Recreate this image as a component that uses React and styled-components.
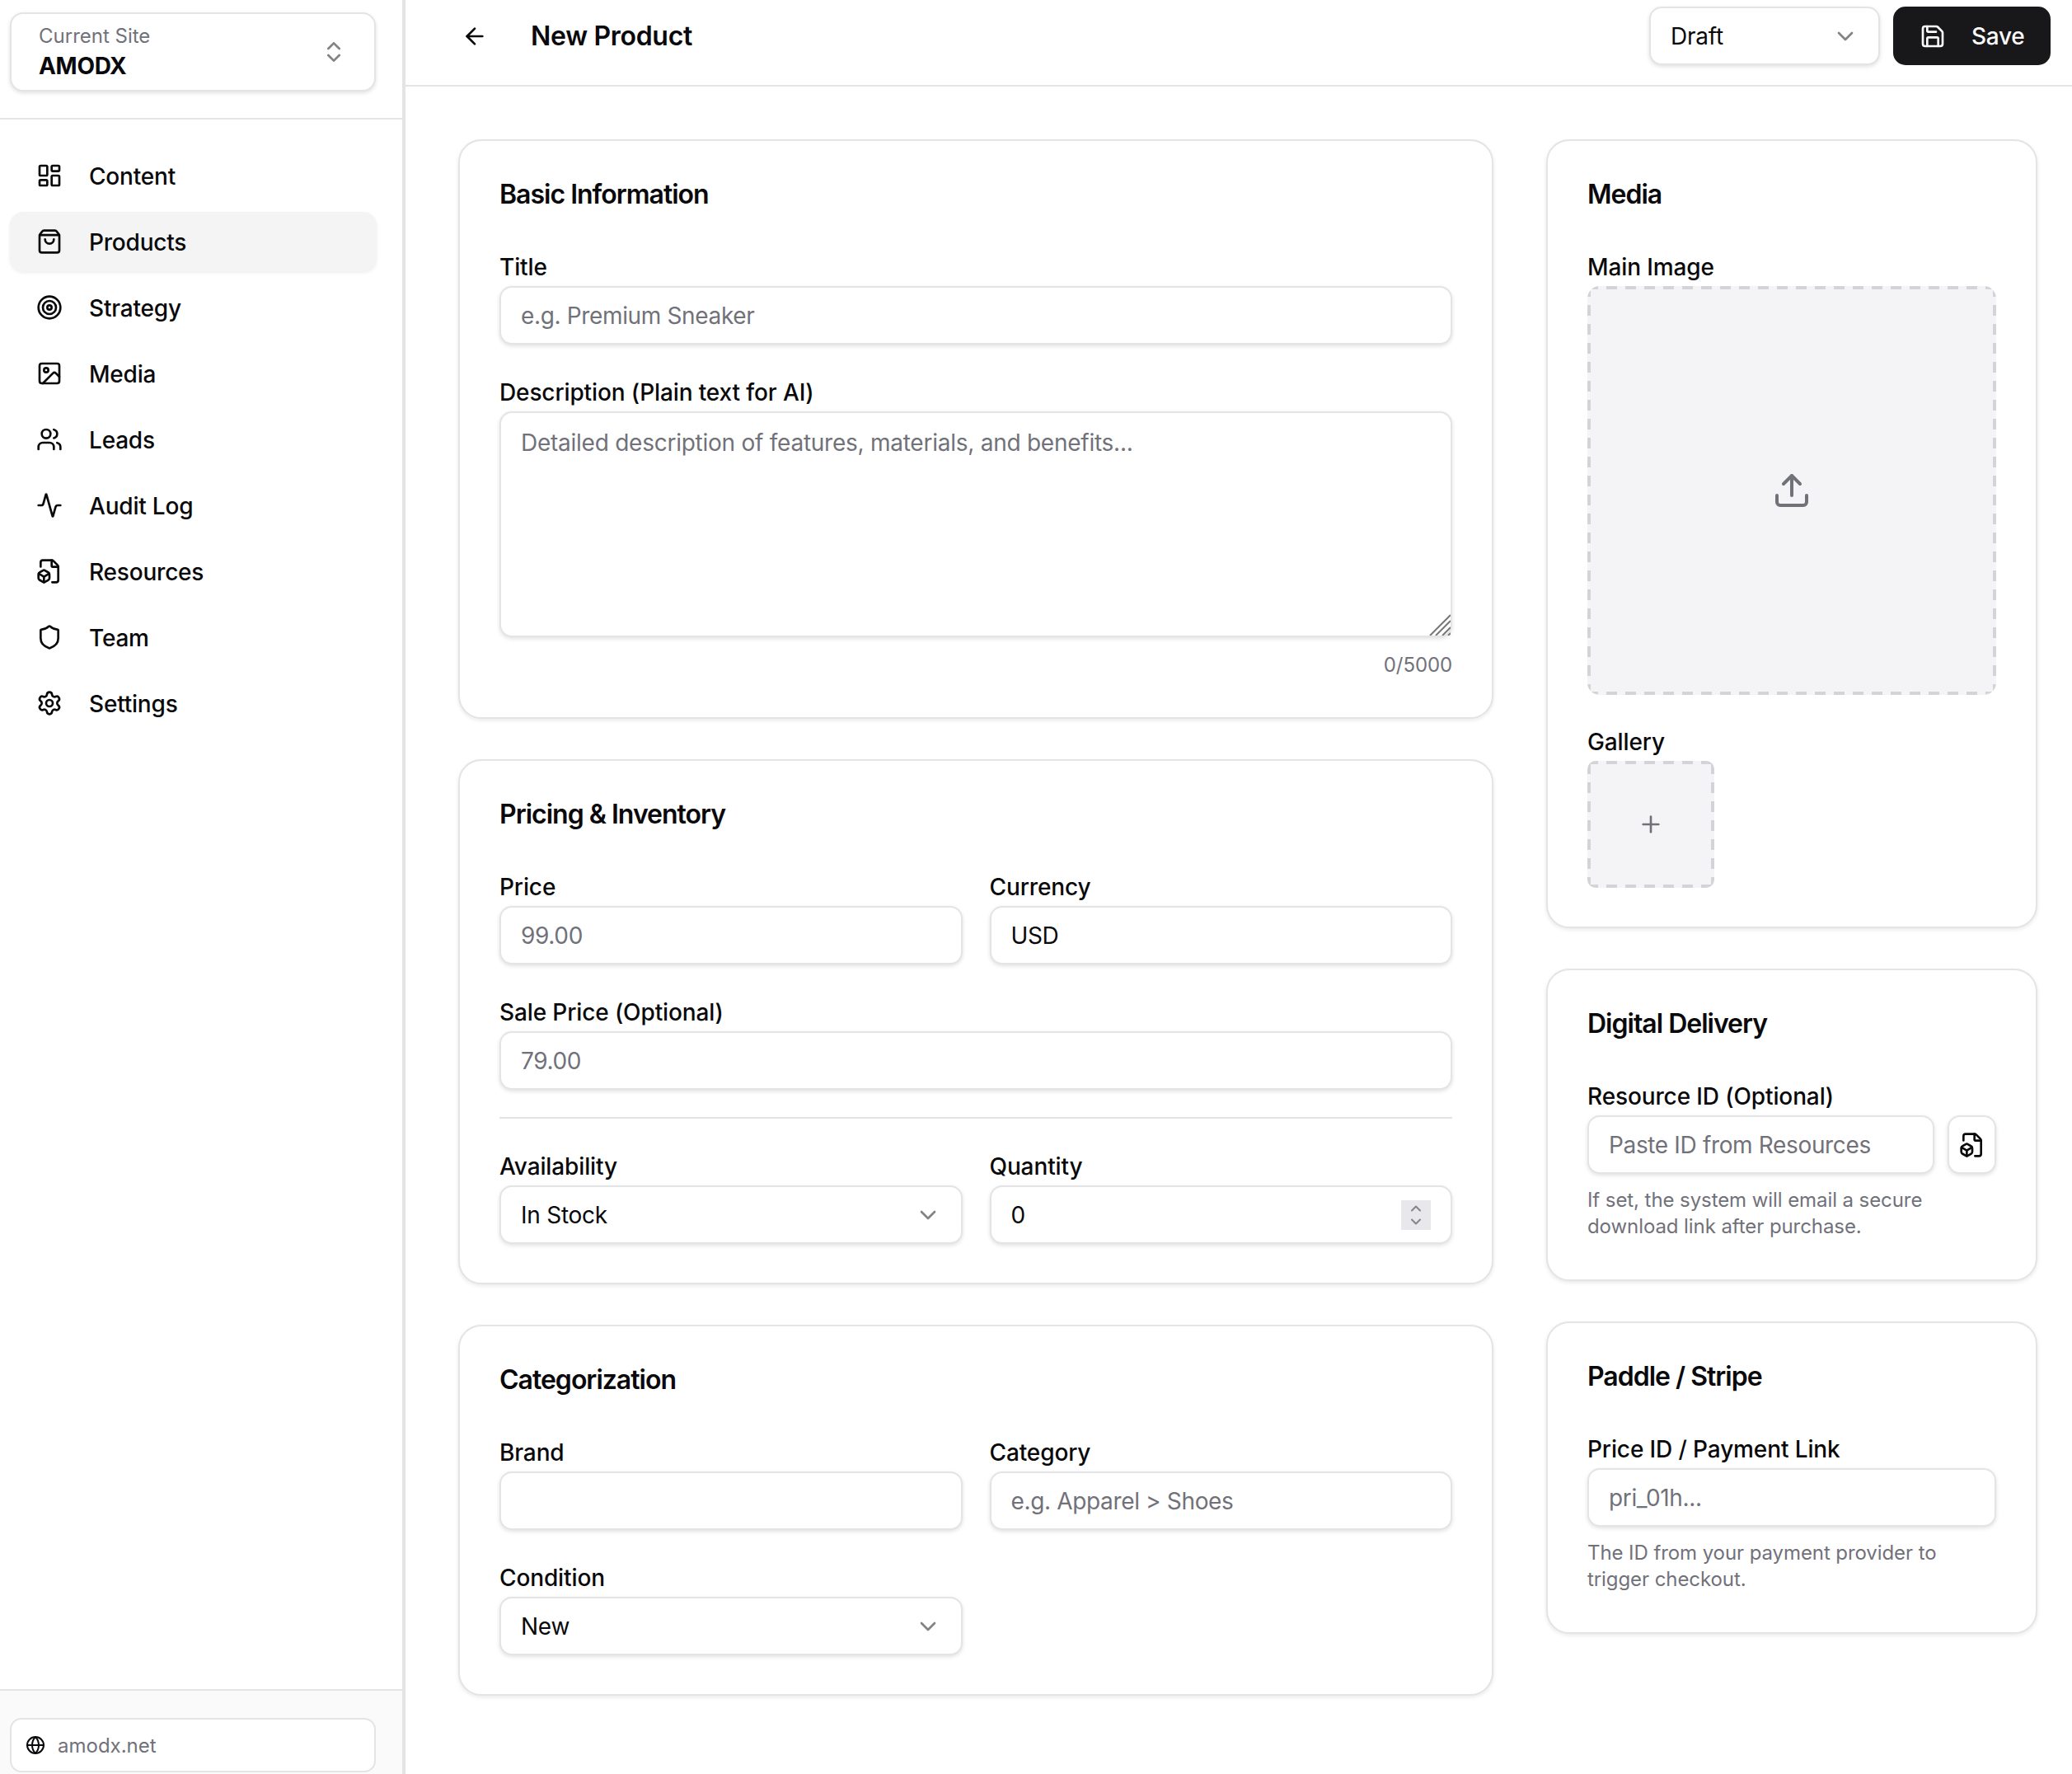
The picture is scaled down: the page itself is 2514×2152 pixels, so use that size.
import React from "react";
import styled, { createGlobalStyle } from "styled-components";
import {
  LayoutDashboard, ShoppingBag, Target, Image as ImageIcon, Users, Activity, FileBox, Shield,
  Settings, ChevronsUpDown, ChevronDown, ChevronUp, Globe, ArrowLeft, Save, Upload, Plus,
} from "lucide-react";

const Global = createGlobalStyle`
  * { box-sizing: border-box; }
  html, body { margin: 0; padding: 0; background: #fff; }
  body { font-family: Inter, "Liberation Sans", sans-serif; color: #09090b; }
`;

const Shell = styled.div`
  display: flex;
  width: 2514px;
  height: 2152px;
  overflow: hidden;
  background: #fff;
`;

const Sidebar = styled.aside`
  width: 492px;
  flex: none;
  display: flex;
  flex-direction: column;
  border-right: 4px solid #e4e4e7;
`;

const SiteArea = styled.div`
  height: 145px;
  flex: none;
  padding: 15px 32px 0 12px;
  border-bottom: 2px solid #e4e4e7;
`;

const SiteSwitcher = styled.div`
  width: 444px;
  height: 96px;
  display: flex;
  align-items: center;
  justify-content: space-between;
  padding: 0 33px 0 33px;
  border: 2px solid #e4e4e7;
  border-radius: 16px;
  background: #fff;
  box-shadow: 0 2px 5px rgba(0, 0, 0, 0.12);
  svg { opacity: 0.5; }
`;

const SiteText = styled.div`
  display: flex;
  flex-direction: column;
`;

const SiteCaption = styled.span`
  font-size: 24px;
  line-height: 34px;
  color: #71717a;
`;

const SiteName = styled.span`
  font-size: 28px;
  line-height: 38px;
  font-weight: 700;
  letter-spacing: -0.3px;
`;

const Nav = styled.nav`
  flex: 1;
  display: flex;
  flex-direction: column;
  gap: 8px;
  padding: 32px 31px 0 12px;
`;

const NavItem = styled.a`
  height: 72px;
  display: flex;
  align-items: center;
  gap: 32px;
  padding: 0 32px;
  font-size: 28px;
  font-weight: 500;
  letter-spacing: -0.2px;
  border-radius: 16px;
  background: ${(p) => (p.$active ? "#f4f4f5" : "transparent")};
  box-shadow: ${(p) => (p.$active ? "0 2px 4px rgba(0,0,0,0.07)" : "none")};
`;

const NavLabel = styled.span`
  padding-top: 2px;
`;

const SideFooter = styled.div`
  flex: none;
  height: 103px;
  padding: 33px 32px 0 12px;
  background: #fafafa;
  border-top: 2px solid #e4e4e7;
`;

const DomainBox = styled.div`
  width: 444px;
  height: 66px;
  display: flex;
  align-items: center;
  gap: 15px;
  padding: 0 17px;
  background: #fff;
  border: 2px solid #e4e4e7;
  border-radius: 14px;
  font-size: 24px;
  color: #71717a;
  svg { color: #09090b; }
`;

const Main = styled.main`
  flex: 1;
  min-width: 0;
  display: flex;
  flex-direction: column;
`;

const Header = styled.header`
  height: 105px;
  flex: none;
  display: flex;
  align-items: center;
  padding: 0 26px 16px 68px;
  border-bottom: 2px solid #e4e4e7;
`;

const PageTitle = styled.h1`
  margin: 0 0 0 52px;
  font-size: 32px;
  font-weight: 600;
  line-height: 40px;
  letter-spacing: -0.3px;
  flex: 1;
`;

const SelectButton = styled.div`
  width: ${(p) => p.$width || "100%"};
  height: 71px;
  flex: none;
  display: flex;
  align-items: center;
  justify-content: space-between;
  padding: 0 24px;
  background: #fff;
  border: 2px solid #e4e4e7;
  border-radius: 15px;
  box-shadow: 0 2px 5px rgba(0, 0, 0, 0.12);
  font-size: 28px;
  letter-spacing: -0.25px;
  svg { opacity: 0.5; }
`;

const SaveButton = styled.button`
  width: 191px;
  height: 71px;
  flex: none;
  margin-left: 16px;
  display: flex;
  align-items: center;
  gap: 31px;
  padding: 0 0 0 32px;
  border: none;
  border-radius: 15px;
  background: #18181b;
  color: #fafafa;
  font: 500 28px Inter, sans-serif;
  letter-spacing: -0.25px;
`;

const Content = styled.div`
  flex: 1;
  display: grid;
  grid-template-columns: repeat(3, 1fr);
  align-items: start;
  column-gap: 64px;
  padding: 64px 42px 0 64px;
`;

const LeftColumn = styled.div`
  grid-column: span 2;
  display: flex;
  flex-direction: column;
  gap: 49px;
`;

const RightColumn = styled.div`
  display: flex;
  flex-direction: column;
  gap: 49px;
`;

const Card = styled.section`
  border: 2px solid #e4e4e7;
  border-radius: 28px;
  background: #fff;
  box-shadow: 0 2px 5px rgba(0, 0, 0, 0.09);
  padding: 48px 48px 47px;
`;

const CardTitle = styled.h2`
  margin: 0 0 57px;
  padding-top: 1px;
  font-size: 32px;
  line-height: 32px;
  font-weight: 600;
  letter-spacing: -1px;
`;

const Stack = styled.div`
  display: flex;
  flex-direction: column;
  gap: 43px;
`;

const MediaStack = styled(Stack)`
  gap: 42px;
`;

const Row = styled.div`
  display: grid;
  grid-template-columns: 1fr 1fr;
  gap: 33px;
`;

const Field = styled.div`
  display: flex;
  flex-direction: column;
  min-width: 0;
`;

const Label = styled.label`
  display: block;
  padding-top: 1px;
  font-size: 28px;
  line-height: 28px;
  font-weight: 500;
  letter-spacing: -0.12px;
  margin-bottom: 9px;
`;

const Input = styled.input`
  width: 100%;
  height: 71px;
  padding: 0 24px;
  background: #fff;
  border: 2px solid #e4e4e7;
  border-radius: 15px;
  box-shadow: 0 2px 5px rgba(0, 0, 0, 0.12);
  font: 400 28px Inter, sans-serif;
  letter-spacing: -0.35px;
  color: #09090b;
  outline: none;
  &::placeholder { color: #71717a; opacity: 1; }
`;

const TextAreaWrap = styled.div`
  position: relative;
  height: 274px;
`;

const TextArea = styled.textarea`
  display: block;
  width: 100%;
  height: 100%;
  padding: 20px 24px;
  resize: none;
  background: #fff;
  border: 2px solid #e4e4e7;
  border-radius: 15px;
  box-shadow: 0 2px 5px rgba(0, 0, 0, 0.12);
  font: 400 28px/32px Inter, sans-serif;
  letter-spacing: -0.25px;
  outline: none;
  &::placeholder { color: #71717a; opacity: 1; }
`;

const Resizer = styled.svg`
  position: absolute;
  right: 2px;
  bottom: 2px;
  width: 26px;
  height: 26px;
`;

const Counter = styled.div`
  margin-top: 18px;
  text-align: right;
  font-size: 24px;
  line-height: 32px;
  letter-spacing: -0.1px;
  color: #71717a;
`;

const Divider = styled.hr`
  margin: -10px 0 0;
  border: 0;
  height: 2px;
  background: #e4e4e7;
`;

const NumberBox = styled.div`
  height: 71px;
  display: flex;
  align-items: center;
  justify-content: space-between;
  padding: 0 24px;
  background: #fff;
  border: 2px solid #e4e4e7;
  border-radius: 15px;
  box-shadow: 0 2px 5px rgba(0, 0, 0, 0.12);
  font-size: 28px;
`;

const Stepper = styled.span`
  width: 36px;
  height: 36px;
  display: flex;
  flex-direction: column;
  align-items: center;
  justify-content: center;
  background: #e8e8ec;
  color: #85858c;
  svg { margin: -2px 0; }
`;

const MainDrop = styled.div`
  width: 100%;
  aspect-ratio: 1 / 1;
  display: flex;
  align-items: center;
  justify-content: center;
  color: #71717a;
  border-radius: 15px;
  background:
    repeating-linear-gradient(90deg, #d4d4d8 0 13px, transparent 13px 23px) 0 0 / 100% 4px no-repeat,
    repeating-linear-gradient(90deg, #d4d4d8 0 13px, transparent 13px 23px) 0 100% / 100% 4px no-repeat,
    repeating-linear-gradient(0deg, #d4d4d8 0 13px, transparent 13px 23px) 0 0 / 4px 100% no-repeat,
    repeating-linear-gradient(0deg, #d4d4d8 0 13px, transparent 13px 23px) 100% 0 / 4px 100% no-repeat,
    #f4f4f6;
`;

const GalleryDrop = styled(MainDrop)`
  width: 154px;
  border-radius: 10px;
  svg { display: block; }
`;

const InlineRow = styled.div`
  display: flex;
  gap: 16px;
`;

const IconButton = styled.button`
  width: 59px;
  height: 71px;
  flex: none;
  display: flex;
  align-items: center;
  justify-content: center;
  padding: 0;
  background: #fff;
  color: #09090b;
  border: 2px solid #e4e4e7;
  border-radius: 15px;
  box-shadow: 0 2px 5px rgba(0, 0, 0, 0.12);
`;

const Help = styled.p`
  margin: 16px 0 0 0;
  padding-bottom: 1px;
  font-size: 24px;
  line-height: 32px;
  letter-spacing: -0.08px;
  color: #71717a;
`;

const navItems = [
  ["Content", LayoutDashboard],
  ["Products", ShoppingBag],
  ["Strategy", Target],
  ["Media", ImageIcon],
  ["Leads", Users],
  ["Audit Log", Activity],
  ["Resources", FileBox],
  ["Team", Shield],
  ["Settings", Settings],
];

function Select({ value, width }) {
  return (
    <SelectButton $width={width}>
      <span>{value}</span>
      <ChevronDown size={32} />
    </SelectButton>
  );
}

function TextField({ label, placeholder, value }) {
  return (
    <Field>
      <Label>{label}</Label>
      <Input placeholder={placeholder} defaultValue={value} />
    </Field>
  );
}

export default function App() {
  return (
    <Shell>
      <Global />
      <Sidebar>
        <SiteArea>
          <SiteSwitcher>
            <SiteText>
              <SiteCaption>Current Site</SiteCaption>
              <SiteName>AMODX</SiteName>
            </SiteText>
            <ChevronsUpDown size={32} />
          </SiteSwitcher>
        </SiteArea>
        <Nav>
          {navItems.map(([name, Icon]) => (
            <NavItem key={name} $active={name === "Products"}>
              <Icon size={32} />
              <NavLabel>{name}</NavLabel>
            </NavItem>
          ))}
        </Nav>
        <SideFooter>
          <DomainBox>
            <Globe size={24} />
            amodx.net
          </DomainBox>
        </SideFooter>
      </Sidebar>
      <Main>
        <Header>
          <ArrowLeft size={32} />
          <PageTitle>New Product</PageTitle>
          <Select value="Draft" width="280px" />
          <SaveButton>
            <Save size={32} />
            Save
          </SaveButton>
        </Header>
        <Content>
          <LeftColumn>
            <Card>
              <CardTitle>Basic Information</CardTitle>
              <Stack>
                <TextField label="Title" placeholder="e.g. Premium Sneaker" />
                <Field>
                  <Label>Description (Plain text for AI)</Label>
                  <TextAreaWrap>
                    <TextArea placeholder="Detailed description of features, materials, and benefits..." />
                    <Resizer viewBox="0 0 26 26" fill="none" stroke="#777" strokeWidth="2">
                      <path d="M1 26 26 1M8 26 26 8M16 26 26 16M23 26 26 23" />
                    </Resizer>
                  </TextAreaWrap>
                  <Counter>0/5000</Counter>
                </Field>
              </Stack>
            </Card>
            <Card>
              <CardTitle>Pricing &amp; Inventory</CardTitle>
              <Stack>
                <Row>
                  <TextField label="Price" placeholder="99.00" />
                  <TextField label="Currency" value="USD" />
                </Row>
                <TextField label="Sale Price (Optional)" placeholder="79.00" />
                <Divider />
                <Row>
                  <Field>
                    <Label>Availability</Label>
                    <Select value="In Stock" />
                  </Field>
                  <Field>
                    <Label>Quantity</Label>
                    <NumberBox>
                      <span>0</span>
                      <Stepper>
                        <ChevronUp size={20} strokeWidth={2.5} />
                        <ChevronDown size={20} strokeWidth={2.5} />
                      </Stepper>
                    </NumberBox>
                  </Field>
                </Row>
              </Stack>
            </Card>
            <Card>
              <CardTitle>Categorization</CardTitle>
              <Stack>
                <Row>
                  <TextField label="Brand" />
                  <TextField label="Category" placeholder="e.g. Apparel > Shoes" />
                </Row>
                <Row>
                  <Field>
                    <Label>Condition</Label>
                    <Select value="New" />
                  </Field>
                </Row>
              </Stack>
            </Card>
          </LeftColumn>
          <RightColumn>
            <Card>
              <CardTitle>Media</CardTitle>
              <MediaStack>
                <Field>
                  <Label>Main Image</Label>
                  <MainDrop>
                    <Upload size={48} />
                  </MainDrop>
                </Field>
                <Field>
                  <Label>Gallery</Label>
                  <GalleryDrop>
                    <Plus size={32} />
                  </GalleryDrop>
                </Field>
              </MediaStack>
            </Card>
            <Card>
              <CardTitle>Digital Delivery</CardTitle>
              <Field>
                <Label>Resource ID (Optional)</Label>
                <InlineRow>
                  <Input placeholder="Paste ID from Resources" />
                  <IconButton>
                    <FileBox size={32} />
                  </IconButton>
                </InlineRow>
                <Help>If set, the system will email a secure download link after purchase.</Help>
              </Field>
            </Card>
            <Card>
              <CardTitle>Paddle / Stripe</CardTitle>
              <Field>
                <Label>Price ID / Payment Link</Label>
                <Input placeholder="pri_01h..." />
                <Help>The ID from your payment provider to trigger checkout.</Help>
              </Field>
            </Card>
          </RightColumn>
        </Content>
      </Main>
    </Shell>
  );
}
